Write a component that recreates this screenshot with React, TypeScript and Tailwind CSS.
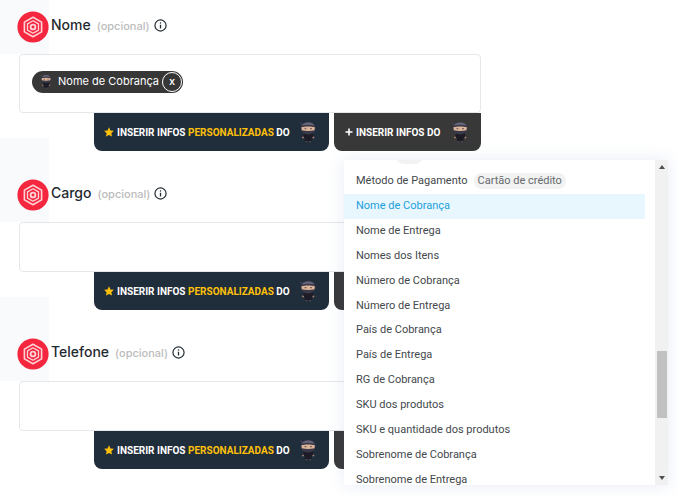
import { useState } from "react";

const fields = [
  { id: "nome", label: "Nome", value: "Nome de Cobrança" },
  { id: "cargo", label: "Cargo", value: "" },
  { id: "telefone", label: "Telefone", value: "" },
];

const options = [
  { label: "Moeda", example: "BRL" },
  { label: "Método de Pagamento", example: "Cartão de crédito" },
  { label: "Nome de Cobrança" },
  { label: "Nome de Entrega" },
  { label: "Nomes dos Itens" },
  { label: "Número de Cobrança" },
  { label: "Número de Entrega" },
  { label: "País de Cobrança" },
  { label: "País de Entrega" },
  { label: "RG de Cobrança" },
  { label: "SKU dos produtos" },
  { label: "SKU e quantidade dos produtos" },
  { label: "Sobrenome de Cobrança" },
  { label: "Sobrenome de Entrega" },
];

function Logo() {
  return (
    <svg viewBox="0 0 32 32" className="size-8 shrink-0" fill="none" aria-hidden="true">
      <circle cx="16" cy="16" r="15.6" fill="#f5273f" />
      <g stroke="#ffd3d7" strokeLinejoin="round">
        <path d="M16 6.2l8.6 4.9v9.8L16 25.8l-8.6-4.9v-9.8z" strokeWidth="1.6" />
        <path d="M16 9.8l5.5 3.1v6.2L16 22.2l-5.5-3.1v-6.2z" strokeWidth="1.3" />
        <circle cx="16" cy="16" r="2.4" strokeWidth="1.9" />
      </g>
    </svg>
  );
}

function Ninja({ className }: { className: string }) {
  return (
    <svg viewBox="0 0 18 22" className={className} aria-hidden="true">
      <path d="M5 11.5h8.5l1.2 5-2 .6-.4 4.2H9.8l-.5-2.6-.5 2.6H6.2l-.3-4.2-2-.6z" fill="#1c1b26" />
      <path d="M.6 1.2l3 1.6-1 1.2z" fill="#4d4b5e" />
      <path d="M1.800 7.200C1.800 3 4.800.8 9.200.8s7.200 2.200 7.200 6.400c0 4-2.800 6.200-7.200 6.200s-7.400-2.200-7.400-6.200z" fill="#3a394a" />
      <path d="M3 4.400C4.300 2.200 6.500 1.400 9.200 1.400s5 .8 6.100 3c-3.600-1-8.500-1-12.300 0z" fill="#68667b" />
      <path d="M2.400 6.300c3.800-1 9.700-1 13.500 0l-.4 3c-3.600.8-9 .8-12.700 0z" fill="#dcb498" />
      <path d="M5.500 7.700h2M11 7.700h2" stroke="#6b5350" strokeWidth="1" />
      <circle cx="4" cy="16.600" r="1" fill="#a07c70" />
      <circle cx="14.400" cy="16.600" r="1" fill="#a07c70" />
      <path d="M6.500 20.800h2M10.200 20.800h2" stroke="#77717f" strokeWidth=".8" />
    </svg>
  );
}

function InfoIcon() {
  return (
    <svg viewBox="0 0 14 14" className="size-[13px]" fill="none" stroke="#222c33" aria-hidden="true">
      <circle cx="7" cy="7" r="6" strokeWidth="1.3" />
      <path d="M7 6.2v4" strokeWidth="1.4" />
      <path d="M7 3.6v1.4" strokeWidth="1.4" />
    </svg>
  );
}

function OptionsMenu({ selected, onSelect }: { selected: string; onSelect: (v: string) => void }) {
  return (
    <div className="absolute left-[10px] top-full z-10 mt-[9px] flex h-[325px] w-[324px] bg-white font-normal shadow-[0_0_16px_rgba(80,110,190,0.14)]">
      <div className="flex-1 overflow-hidden pr-[10px]">
        <ul role="listbox" aria-label="Infos" className="-mt-4 grid h-[348px] auto-rows-fr">
          {options.map((o) => (
            <li
              key={o.label}
              role="option"
              aria-selected={o.label === selected}
              onClick={() => onSelect(o.label)}
              className={
                "flex cursor-pointer items-center pl-3 text-[11px] leading-4 " +
                (o.label === selected ? "bg-[#e8f7fe] text-[#1c9fdc]" : "text-[#43484b]")
              }
            >
              {o.label}
              {o.example && (
                <span className="ml-[6px] rounded-full bg-[#f2f2f2] px-1 text-[#666b6e]">{o.example}</span>
              )}
            </li>
          ))}
        </ul>
      </div>
      <div className="flex w-[13px] flex-col items-center justify-between bg-[#f1f1f1] py-[5px]">
        <span className="border-x-3 border-b-4 border-x-transparent border-b-[#505050]" />
        <span className="absolute top-[191px] h-[67px] w-[10px] bg-[#c1c1c1]" />
        <span className="border-x-3 border-t-4 border-x-transparent border-t-[#505050]" />
      </div>
    </div>
  );
}

export default function App() {
  const [values, setValues] = useState(fields.map((f) => f.value));
  const [open, setOpen] = useState<number | null>(0);

  const setValue = (i: number, value: string) =>
    setValues(values.map((v, n) => (n === i ? value : v)));

  return (
    <main className="h-screen overflow-hidden bg-white font-['Roboto',sans-serif]">
      {fields.map((f, i) => (
        <section key={f.id} className={i === 0 ? "" : "-mt-[13px]"}>
          <div className={"flex items-end " + (i === 0 ? "h-[54px]" : "h-[84px]")}>
            <div className="flex h-full w-[49px] items-end justify-end bg-[#f9fafc] pb-[11px]">
              <Logo />
            </div>
            <div className="flex items-center pb-[18px] pl-[2px]">
              <label htmlFor={f.id} className="text-sm font-medium leading-5 text-[#1f2a30] font-['Inter',sans-serif]">
                {f.label}
                <span className="ml-[6px] text-[11px] text-[#bcbcbc]">(opcional)</span>
              </label>
              <button type="button" aria-label={"Sobre " + f.label} className="ml-1">
                <InfoIcon />
              </button>
            </div>
          </div>

          <div className="ml-[19px] max-w-[462px]">
            <div
              className={
                "flex items-center rounded border border-[#e6e7e9] px-3 pb-1 " + (i === 0 ? "h-[59px]" : "h-[50px]")
              }
            >
              {values[i] && (
                <span className="flex h-[22px] shrink-0 items-center rounded-full bg-[#373737] pl-2 pr-px text-[11px] text-white font-['Inter',sans-serif]">
                  <Ninja className="mr-[6px] h-[15px] w-3" />
                  {values[i]}
                  <button
                    type="button"
                    aria-label="Remover"
                    onClick={() => setValue(i, "")}
                    className="ml-[3px] flex size-5 items-center justify-center rounded-full border border-white font-medium leading-none"
                  >
                    x
                  </button>
                </span>
              )}
              <input id={f.id} type="text" className="min-w-0 flex-1 bg-transparent px-1 text-xs outline-none" />
            </div>

            <div className="flex justify-end gap-[5px] text-[10px] font-bold text-white">
              <button
                type="button"
                className="flex h-[38px] w-[235px] items-center rounded-b-lg bg-[#202d3b] pl-[10px] pr-3"
              >
                <svg viewBox="0 0 20 20" className="mr-[3px] size-[10px]" fill="#ffc10a" aria-hidden="true">
                  <path d="M10 .5l2.9 6.3 6.9.8-5.1 4.700 1.400 6.900L10 15.800l-6.100 3.400 1.400-6.900L.2 7.600l6.900-.8z" />
                </svg>
                <span>
                  INSERIR INFOS <span className="text-[#ffc10a]">PERSONALIZADAS</span> DO
                </span>
                <Ninja className="ml-auto h-[22px] w-[18px]" />
              </button>
              <div className="relative">
                <button
                  type="button"
                  aria-expanded={open === i}
                  onClick={() => setOpen(open === i ? null : i)}
                  className="flex h-[38px] w-[147px] items-center rounded-b-lg bg-[#383838] pl-[11px] pr-3"
                >
                  <svg viewBox="0 0 8 8" className="mr-[3px] size-2" stroke="#fff" strokeWidth="1.6" aria-hidden="true">
                    <path d="M4 .5v7M.5 4h7" />
                  </svg>
                  INSERIR INFOS DO
                  <Ninja className="ml-auto h-[22px] w-[18px]" />
                </button>
                {open === i && <OptionsMenu selected={values[i]} onSelect={(v) => setValue(i, v)} />}
              </div>
            </div>
          </div>
        </section>
      ))}
    </main>
  );
}
